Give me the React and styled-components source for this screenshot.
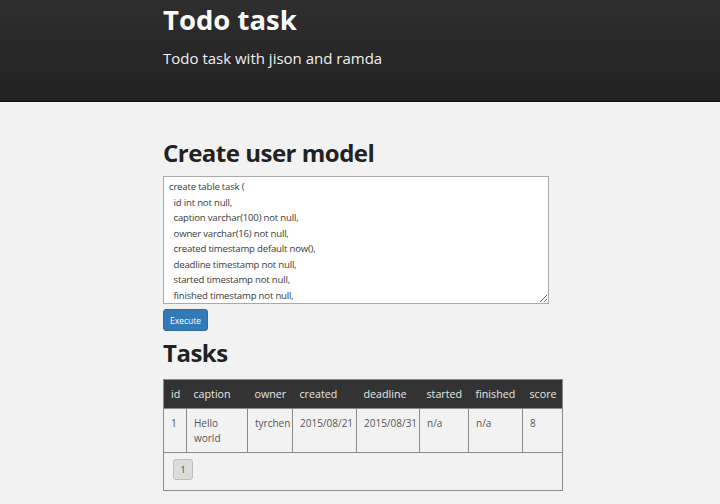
import React from "react";
import styled, { createGlobalStyle } from "styled-components";

const Global = createGlobalStyle`
  html, body { margin: 0; padding: 0; }
  body {
    background: #f2f2f2;
    font-family: "Open Sans", "DejaVu Sans", sans-serif;
    color: #333;
  }
`;

const Header = styled.header`
  height: 101px;
  background: linear-gradient(to bottom, #2e2e2e 0%, #222 100%);
  border-bottom: 1px solid #151515;
  box-sizing: content-box;
`;

const Container = styled.div`
  width: 404px;
  box-sizing: border-box;
  padding-left: 5px;
  margin: 0 auto;
`;

const Title = styled.h1`
  margin: 0;
  padding-top: 1px;
  font-size: 27.5px;
  line-height: 38px;
  font-weight: 700;
  color: #fafafa;
`;

const Subtitle = styled.p`
  margin: 8px 0 0;
  font-size: 15px;
  line-height: 22px;
  color: #f0f0f0;
`;

const Main = styled.main`
  padding-top: 36px;
`;

const SectionTitle = styled.h2`
  margin: ${(p) => p.$top || 0}px 0 ${(p) => p.$gap || 8}px;
  font-size: 24px;
  line-height: 30px;
  letter-spacing: -0.5px;
  font-weight: 700;
  color: #222;
`;

const Editor = styled.textarea`
  display: block;
  width: 386px;
  height: 128px;
  box-sizing: border-box;
  margin: 0;
  padding: 2px 5px;
  border: 1px solid #a9a9a9;
  background: #fff;
  font-family: "Open Sans", "DejaVu Sans", sans-serif;
  font-size: 9.6px;
  letter-spacing: -0.2px;
  line-height: 15.5px;
  color: #3a3a3a;
  white-space: pre;
  overflow: hidden;
`;

const Button = styled.button`
  display: block;
  margin-top: 5px;
  width: 45px;
  height: 22px;
  padding: 0;
  background: #337ab7;
  border: 1px solid #2e6da4;
  border-radius: 3px;
  color: #fff;
  font-family: "Open Sans", "DejaVu Sans", sans-serif;
  font-size: 8.5px;
`;

const Table = styled.table`
  width: 399px;
  border-collapse: collapse;
  table-layout: fixed;
  border: 1px solid #8a8a8a;
`;

const Th = styled.th`
  background: #333;
  color: #e6e6e6;
  font-weight: 400;
  font-size: 10.7px;
  text-align: left;
  padding: 0 0 0 7px;
  height: 29px;
  box-sizing: border-box;
`;

const Td = styled.td`
  border: 1px solid #8a8a8a;
  vertical-align: top;
  padding: 7px 7px 0;
  height: 44px;
  box-sizing: border-box;
  font-size: 10px;
  line-height: 15px;
  color: #555;
`;

const FooterCell = styled.td`
  border: 1px solid #8a8a8a;
  padding: 6px 9px 0;
  height: 38px;
  box-sizing: border-box;
  vertical-align: top;
`;

const PageButton = styled.button`
  display: block;
  width: 20px;
  height: 21px;
  padding: 0;
  background: #dcdcdc;
  border: 1px solid #bdbdbd;
  border-radius: 3px;
  font-family: "Open Sans", "DejaVu Sans", sans-serif;
  font-size: 9px;
  color: #444;
`;

const columns = [
  ["id", 23],
  ["caption", 61],
  ["owner", 45],
  ["created", 64],
  ["deadline", 63],
  ["started", 49],
  ["finished", 54],
  ["score", 40],
];

const sql = `create table task (
  id int not null,
  caption varchar(100) not null,
  owner varchar(16) not null,
  created timestamp default now(),
  deadline timestamp not null,
  started timestamp not null,
  finished timestamp not null,
  score int not null
);`;

const rows = [
  ["1", "Hello world", "tyrchen", "2015/08/21", "2015/08/31", "n/a", "n/a", "8"],
];

export default function App() {
  return (
    <>
      <Global />
      <Header>
        <Container>
          <Title>Todo task</Title>
          <Subtitle>Todo task with jison and ramda</Subtitle>
        </Container>
      </Header>
      <Main>
        <Container>
          <SectionTitle $gap={8}>Create user model</SectionTitle>
          <Editor defaultValue={sql} spellCheck={false} />
          <Button>Execute</Button>
          <SectionTitle $top={7} $gap={11}>Tasks</SectionTitle>
          <Table>
            <colgroup>
              {columns.map(([n, w]) => (
                <col key={n} style={{ width: w }} />
              ))}
            </colgroup>
            <thead>
              <tr>
                {columns.map(([n]) => (
                  <Th key={n}>{n}</Th>
                ))}
              </tr>
            </thead>
            <tbody>
              {rows.map((r) => (
                <tr key={r[0]}>
                  {r.map((c, i) => (
                    <Td key={i}>{c}</Td>
                  ))}
                </tr>
              ))}
            </tbody>
            <tfoot>
              <tr>
                <FooterCell colSpan={8}>
                  <PageButton>1</PageButton>
                </FooterCell>
              </tr>
            </tfoot>
          </Table>
        </Container>
      </Main>
    </>
  );
}
